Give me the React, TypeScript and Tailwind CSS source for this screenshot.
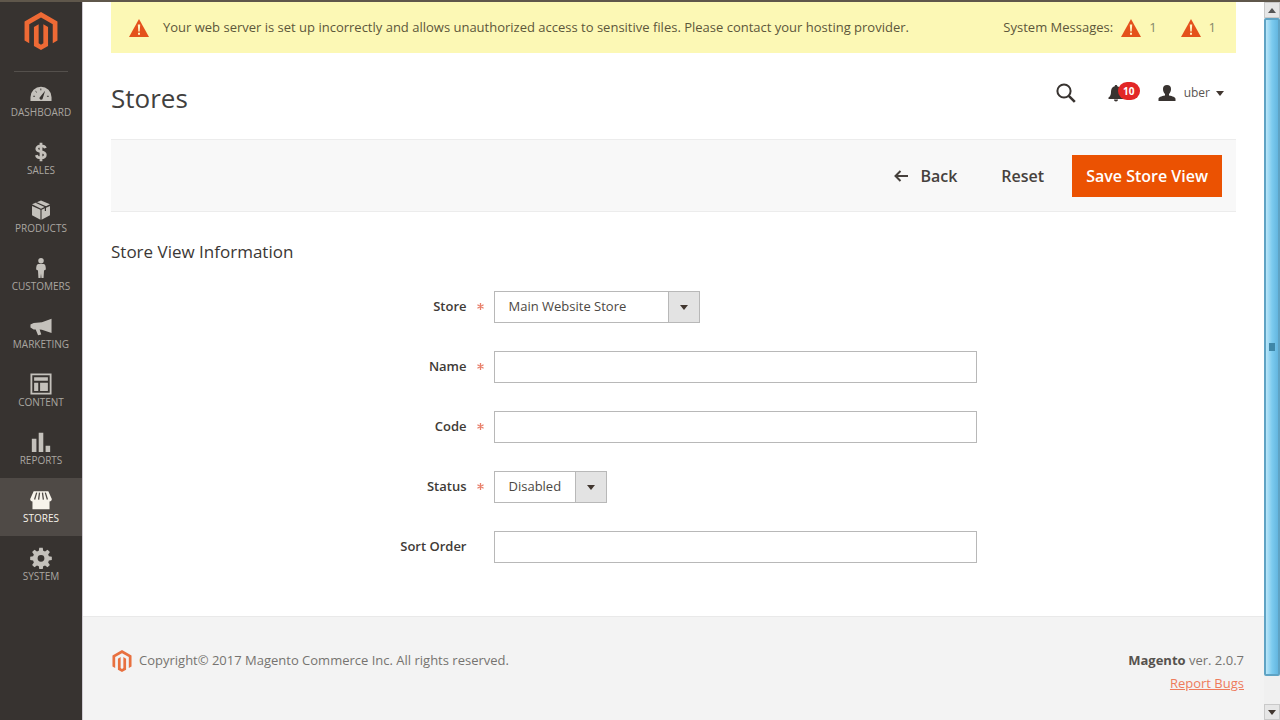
// src/App.tsx
import React from 'react';

const MagentoMark = ({ className }: { className: string }) => (
  <svg viewBox="0 0 24 24" className={className} fill="currentColor" aria-hidden="true">
    <path d="M12 24l-4.455-2.572v-12l2.97-1.715v12.001l1.485.902 1.485-.902V7.713l2.971 1.715v12L12 24zM22.391 6v12l-2.969 1.714V7.713L12 3.43 4.574 7.713v12.001L1.609 18V6L12 0l10.391 6z" />
  </svg>
);

const WarningIcon = () => (
  <svg viewBox="0 0 20 18" className="h-[18px] w-5 shrink-0" aria-hidden="true">
    <path d="M10 0 20 18H0z" fill="#e4511c" />
    <path d="M8.8 5.5h2.4l-.5 7H9.3zM9 13.8h2v2H9z" fill="#fff3c4" />
  </svg>
);

const Caret = () => (
  <svg viewBox="0 0 8 5" className="h-[5px] w-2" fill="#41362f" aria-hidden="true">
    <path d="M0 0h8L4 5z" />
  </svg>
);

const navItems: { label: string; icon: React.ReactNode; active?: boolean }[] = [
  {
    label: 'Dashboard',
    icon: (
      <>
        <path d="M.5 19.500v-4a11.500 11.500 0 0 1 23 0v4z" />
        <path d="M10.300 16 16.500 8.500l-2.900 9.300a2 2 0 0 1-3.300-1.800z" fill="#373330" />
        <path d="M3.500 14.500h2M6 9l1.400 1.200M11.800 6v2M18.500 14.500h2" stroke="#373330" />
      </>
    ),
  },
  {
    label: 'Sales',
    icon: (
      <path
        d="M16.800 7.800c-.6-1.700-2.500-2.500-4.800-2.500-2.700 0-4.600 1.100-4.600 3.100 0 4.500 9.300 2 9.300 6.700 0 2.300-2 3.400-4.700 3.400-2.600 0-4.500-1-5.100-3.100M12 2v20"
        fill="none"
        stroke="currentColor"
        strokeWidth="3"
      />
    ),
  },
  {
    label: 'Products',
    icon: (
      <>
        <path d="m12 1.500 9.800 4.300L12 10.500 2.200 5.800zM2.200 7.500l9.200 4.300v10.700l-9.200-4.700zM21.800 7.500l-9.200 4.300v10.700l9.200-4.700z" />
        <path d="m6.800 3.800 10 4.600v4.600" fill="none" stroke="#373330" strokeWidth="1.300" />
      </>
    ),
  },
  {
    label: 'Customers',
    icon: (
      <>
        <circle cx="12" cy="4" r="3" />
        <path d="M9 7.500h6c1.600.3 2.300 2.300 2.300 6l-2 1.300L14.800 23h-2.300l-.5-5-.5 5H9.200l-.5-8.200-2-1.300c0-3.700.7-5.700 2.300-6z" />
      </>
    ),
  },
  {
    label: 'Marketing',
    icon: (
      <path d="M23.500 4v15.500L13 16l-2.500-.2 1.800 5.400-3.500.8-2.600-6.300H4L.5 13.700v-3.400L4 8.800l9-.8z" />
    ),
  },
  {
    label: 'Content',
    icon: (
      <>
        <path d="M1.500 1.500h21v21h-21z" fill="none" stroke="currentColor" strokeWidth="2" />
        <path d="M4.500 4.500h15v4h-15zM4.500 10.500h4.500v9H4.500zM11 10.500h8.500v9H11z" />
      </>
    ),
  },
  {
    label: 'Reports',
    icon: <path d="M2 8.500h5V23H2zM9.500 2h5v21h-5zM17 16h5v7h-5z" />,
  },
  {
    label: 'Stores',
    active: true,
    icon: (
      <>
        <path d="M4 2.500h16l3.800 8.500c0 1.600-1 2.500-2.500 2.700V22H2.700v-8.300C1.200 13.500.2 12.600.2 11z" />
        <path d="M7.300 4 5 11.500M10.400 4l-1 7.500M13.600 4l1 7.500M16.700 4l2.300 7.500" stroke="#4f4a46" strokeWidth="1.400" />
      </>
    ),
  },
  {
    label: 'System',
    icon: (
      <path
        fillRule="evenodd"
        d="M10.100.8h3.800l.5 3.200 2 .8 2.700-1.900 2.600 2.600-1.900 2.700.8 2 3.200.5v3.600l-3.200.5-.8 2 1.900 2.700-2.600 2.600-2.700-1.900-2 .8-.5 3.200h-3.800l-.5-3.200-2-.8-2.700 1.900-2.600-2.600 1.900-2.700-.8-2-3.200-.5v-3.600l3.200-.5.8-2-1.900-2.700 2.600-2.600 2.700 1.900 2-.8zM12 8.700a3.700 3.700 0 1 0 0 7.400 3.700 3.700 0 0 0 0-7.400z"
      />
    ),
  },
];

const Sidebar = () => (
  <nav className="w-[82px] shrink-0 bg-[#373330]">
    <a href="#home" aria-label="Magento" className="flex h-[69px] justify-center pt-2.5 text-[#ee6a35]">
      <MagentoMark className="size-[38px]" />
    </a>
    <div className="mx-3.5 h-px bg-[#54504c]" />
    <ul>
      {navItems.map(({ label, icon, active }) => (
        <li key={label}>
          <a
            href={`#${label.toLowerCase()}`}
            className={
              active
                ? 'flex h-[58px] flex-col items-center bg-[#4f4a46] pt-[11px] text-[10px] leading-[14px] text-[#f7f3eb]'
                : 'flex h-[58px] flex-col items-center pt-[11px] text-[10px] leading-[14px] text-[#aaa6a0]'
            }
          >
            <svg
              viewBox="0 0 24 24"
              className={active ? 'size-[22px]' : 'size-[22px] text-[#c4c1bb]'}
              fill="currentColor"
              aria-hidden="true"
            >
              {icon}
            </svg>
            <span className="uppercase">{label}</span>
          </a>
        </li>
      ))}
    </ul>
  </nav>
);

const SystemMessages = () => (
  <div className="flex h-[51px] items-center bg-[#fcf8b5] pr-5 pl-[18px] text-[13px] text-[#5c573b]">
    <WarningIcon />
    <p className="ml-3.5 grow">
      Your web server is set up incorrectly and allows unauthorized access to sensitive files. Please contact your
      hosting provider.
    </p>
    <span className="mr-2">System Messages:</span>
    <a href="#critical" className="flex items-center gap-2 text-[#85886a]">
      <WarningIcon />1
    </a>
    <a href="#major" className="ml-6 flex items-center gap-2 text-[#85886a]">
      <WarningIcon />1
    </a>
  </div>
);

const PageHeader = () => (
  <header className="flex h-[86px] items-start justify-between pt-6 pr-3">
    <h1 className="text-[26px] leading-[42px] text-[#41403e]">Stores</h1>
    <div className="flex h-8 items-center text-[#383330]">
      <button aria-label="Search" className="mr-8">
        <svg viewBox="0 0 20 20" className="size-5" fill="none" stroke="currentColor" aria-hidden="true">
          <circle cx="8" cy="8" r="6.600" strokeWidth="2" />
          <path d="m12.800 12.800 6 6" strokeWidth="2.600" />
        </svg>
      </button>
      <button aria-label="Notifications" className="mr-[18px] flex items-center">
        <svg viewBox="0 0 16 18" className="h-[18px] w-4" fill="currentColor" aria-hidden="true">
          <path d="M8 1c.8 0 1.300.5 1.300 1.200C12 3 13 5 13 8c0 3 1 4.500 2.500 5.500V15H.5v-1.500C2 12.500 3 11 3 8c0-3 1-5 3.700-5.800C6.700 1.500 7.200 1 8 1zM6 15.500h4c0 1.300-.8 2-2 2s-2-.7-2-2z" />
        </svg>
        <span className="-ml-1.5 mb-1 flex h-[18px] w-[22px] items-center justify-center rounded-full bg-[#e22626] text-[10px] font-bold text-white">
          10
        </span>
      </button>
      <button className="flex items-center text-[12px]">
        <svg viewBox="0 0 18 18" className="mr-2 size-[18px]" fill="currentColor" aria-hidden="true">
          <path d="M9 1c2.600 0 4 1.600 4 4 0 2-.7 3.800-2 4.900v1.600c3.600.6 6.500 1.700 6.500 3.500v2H.5v-2c0-1.800 2.900-2.900 6.500-3.500V9.900C5.700 8.800 5 7 5 5c0-2.400 1.400-4 4-4z" />
        </svg>
        <span className="mr-1.5 text-[#5a5552]">uber</span>
        <Caret />
      </button>
    </div>
  </header>
);

const Toolbar = () => (
  <div className="flex h-[73px] items-center justify-end border-y border-[#ececec] bg-[#f8f8f8] pr-3.5 text-[16px] font-semibold text-[#46413d]">
    <button className="mr-11 flex items-center">
      <svg viewBox="0 0 14 12" className="mr-3 h-3 w-3.5" fill="none" stroke="currentColor" aria-hidden="true">
        <path d="M6.500 1 1.500 6l5 5M1.500 6H14" strokeWidth="2" />
      </svg>
      Back
    </button>
    <button className="mr-7">Reset</button>
    <button className="h-[42px] bg-[#eb5202] px-3.5 text-white">Save Store View</button>
  </div>
);

type FieldProps = { id: string; label: string; required?: boolean; children: React.ReactNode };

const Field = ({ id, label, required, children }: FieldProps) => (
  <div className="flex items-center">
    <label htmlFor={id} className="w-[34%] pr-[27px] text-right text-[13px] font-semibold text-[#403b37]">
      <span className="relative">
        {label}
        {required && (
          <svg viewBox="0 0 8 8" className="absolute top-1.5 left-full ml-2.5 size-[7px]" aria-hidden="true">
            <path d="M4 0v8M.5 2l7 4M7.500 2l-7 4" stroke="#e8806c" strokeWidth="1.500" />
          </svg>
        )}
      </span>
    </label>
    {children}
  </div>
);

const TextField = (props: Omit<FieldProps, 'children'>) => (
  <Field {...props}>
    <input
      id={props.id}
      type="text"
      required={props.required}
      className="h-8 w-[43%] border border-[#b8b8b8] bg-white px-3.5 text-[13px] outline-none"
    />
  </Field>
);

type SelectFieldProps = Omit<FieldProps, 'children'> & { options: string[]; compact?: boolean };

const SelectField = ({ options, compact, ...props }: SelectFieldProps) => (
  <Field {...props}>
    <div className="relative">
      <select
        id={props.id}
        className={
          compact
            ? 'block h-8 appearance-none border border-[#b8b8b8] bg-white pr-11 pl-3.5 text-[13px] text-[#4c4844] outline-none'
            : 'block h-8 appearance-none border border-[#b8b8b8] bg-white pr-[72px] pl-3.5 text-[13px] text-[#4c4844] outline-none'
        }
      >
        {options.map((option) => (
          <option key={option}>{option}</option>
        ))}
      </select>
      <span className="pointer-events-none absolute inset-y-0 right-0 flex w-8 items-center justify-center border border-[#b8b8b8] bg-[#e3e3e3]">
        <Caret />
      </span>
    </div>
  </Field>
);

const StoreViewForm = () => (
  <form className="pb-[53px]">
    <h2 className="mt-7 text-[17px] leading-6 font-medium text-[#3b3734]">Store View Information</h2>
    <div className="mt-[27px] flex flex-col gap-7">
      <SelectField id="store" label="Store" required options={['Main Website Store']} />
      <TextField id="name" label="Name" required />
      <TextField id="code" label="Code" required />
      <SelectField id="status" label="Status" required compact options={['Disabled']} />
      <TextField id="sort-order" label="Sort Order" />
    </div>
  </form>
);

const Footer = () => (
  <footer className="flex grow items-start justify-between border-t border-[#e9e9e9] bg-[#f3f3f3] pt-8 pr-5 pl-7 text-[13px] leading-[23px] text-[#767370]">
    <p className="flex items-center">
      <MagentoMark className="mr-1.5 size-[22px] text-[#e8703f]" />
      Copyright© 2017 Magento Commerce Inc. All rights reserved.
    </p>
    <div className="text-right">
      <p>
        <strong className="text-[#56524e]">Magento</strong> ver. 2.0.7
      </p>
      <a href="#bugs" className="text-[#ee7b5c] underline">
        Report Bugs
      </a>
    </div>
  </footer>
);

const Scrollbar = () => (
  <div className="flex w-4 shrink-0 flex-col bg-[#f0f0f0]" aria-hidden="true">
    <div className="flex h-4 items-center justify-center border border-[#c9c9c9] bg-[#e6e6e6]">
      <svg viewBox="0 0 8 5" className="h-[5px] w-2" fill="#555">
        <path d="M0 5h8L4 0z" />
      </svg>
    </div>
    <div className="flex grow items-center justify-center rounded-xs border-2 border-[#5fa3c4] bg-linear-to-r from-[#b9e6f8] via-[#7ccbef] to-[#63b6e0]">
      <span className="h-2 w-1.5 bg-[#3f87a8]" />
    </div>
    <div className="h-7" />
    <div className="flex h-4 items-center justify-center border border-[#c9c9c9] bg-[#e6e6e6]">
      <Caret />
    </div>
  </div>
);

const App: React.FC = () => {
  return (
    <div className="flex min-h-screen flex-col bg-white font-['Open_Sans',sans-serif]">
      <div className="h-0.5 bg-[#5f574b]" />
      <div className="flex grow">
        <Sidebar />
        <main className="flex grow flex-col border-l border-[#cfcbd2]">
          <div className="pr-7 pl-7">
            <SystemMessages />
            <PageHeader />
            <Toolbar />
            <StoreViewForm />
          </div>
          <Footer />
        </main>
        <Scrollbar />
      </div>
    </div>
  );
};

export default App;
